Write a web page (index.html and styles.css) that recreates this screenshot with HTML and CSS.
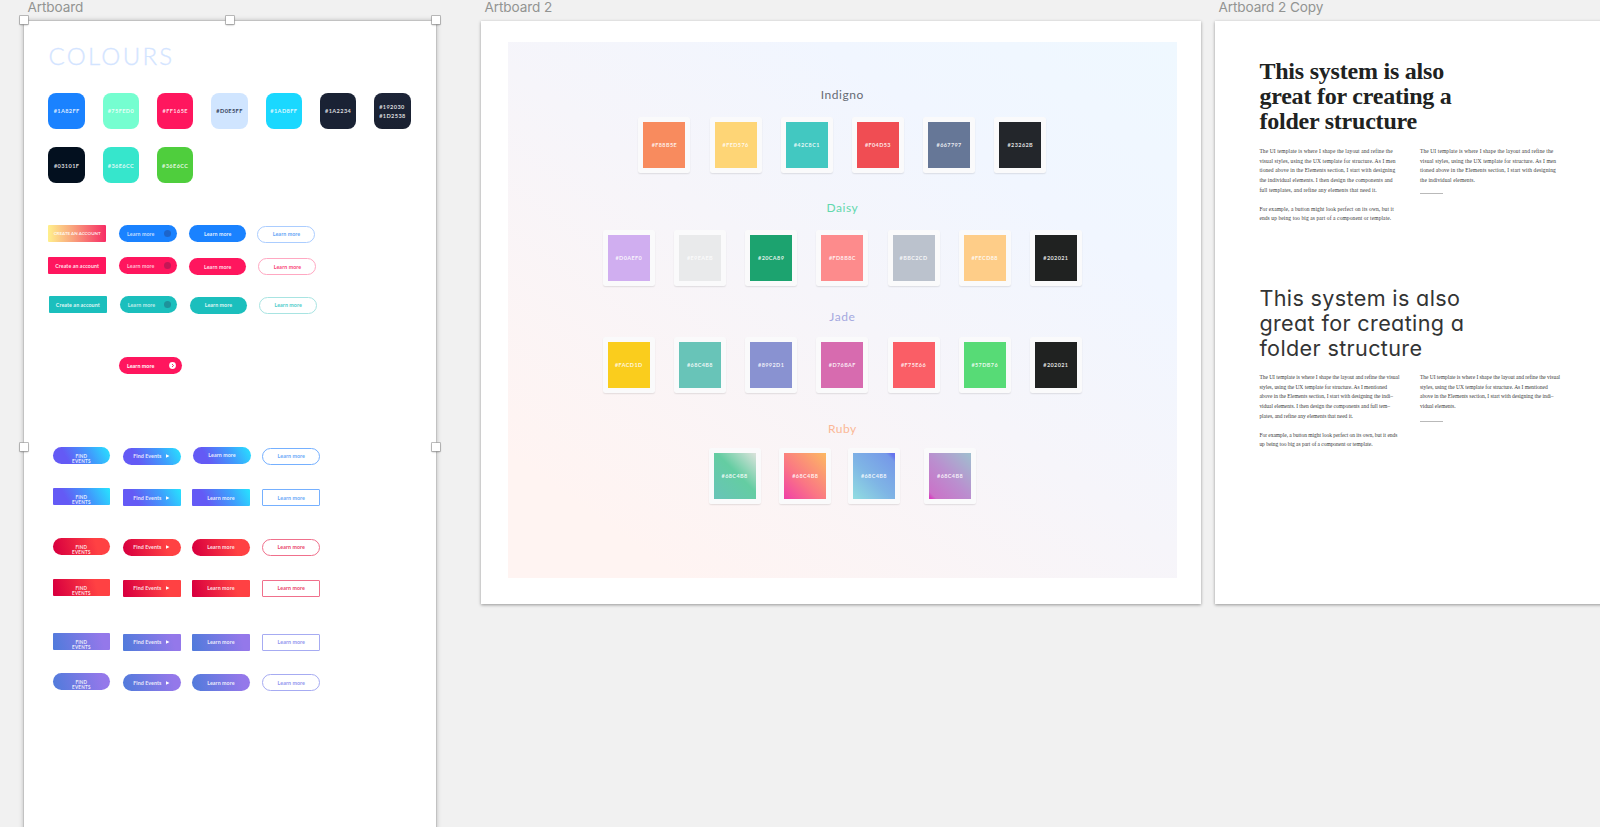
FILE: index.html
```html
<!DOCTYPE html>
<html lang="en">
<head>
<meta charset="utf-8">
<title>Style guide artboards</title>
<link rel="stylesheet" href="styles.css">
</head>
<body>
<main class="canvas">

<section class="artboard-wrap one">
  <h2 class="label">Artboard</h2>
  <div class="artboard selected">
    <i class="handle tl"></i><i class="handle tc"></i><i class="handle tr"></i><i class="handle ml"></i><i class="handle mr"></i>
    <h1 class="title">COLOURS</h1>
    <div class="chips">
      <div class="chip c1">#1A82FF</div><div class="chip c2">#75FED0</div><div class="chip c3">#FF165E</div><div class="chip c4">#D0E5FF</div><div class="chip c5">#1AD8FF</div><div class="chip c6">#1A2234</div><div class="chip c7">#192030<br>#1D2538</div>
      <div class="chip c8">#03101F</div><div class="chip c9">#36E6CC</div><div class="chip c10">#36E6CC</div>
    </div>

    <div class="row r1"><a class="btn sunset caps">CREATE AN ACCOUNT</a><a class="btn pill blue more">Learn more<i class="dot"></i></a><a class="btn pill blue">Learn more</a><a class="btn pill line sky low">Learn more</a></div>
    <div class="row r2"><a class="btn pink">Create an account</a><a class="btn pill pink more">Learn more<i class="dot"></i></a><a class="btn pill pink low">Learn more</a><a class="btn pill line rose low">Learn more</a></div>
    <div class="row r3"><a class="btn teal">Create an account</a><a class="btn pill teal more">Learn more<i class="dot"></i></a><a class="btn pill teal low">Learn more</a><a class="btn pill line mint low">Learn more</a></div>
    <div class="row r4"><a class="btn pill pink more wide">Learn more<svg class="go" viewBox="0 0 7 7"><circle cx="3.5" cy="3.5" r="3.4" fill="#fff"/><path d="M3 2l1.5 1.5L3 5" fill="none" stroke="#ff165e" stroke-width=".9"/></svg></a></div>

    <div class="row alt g1"><a class="btn pill ocean find"><span>FIND<br>EVENTS</span></a><a class="btn pill ocean play low">Find Events<svg viewBox="0 0 4 4"><path d="M0 .3L3.5 2 0 3.7z"/></svg></a><a class="btn pill ocean nudge">Learn more</a><a class="btn pill line azure low">Learn more</a></div>
    <div class="row alt g2"><a class="btn ocean find"><span>FIND<br>EVENTS</span></a><a class="btn ocean play low">Find Events<svg viewBox="0 0 4 4"><path d="M0 .3L3.5 2 0 3.7z"/></svg></a><a class="btn ocean low">Learn more</a><a class="btn line azure low">Learn more</a></div>
    <div class="row alt g3"><a class="btn pill fire find"><span>FIND<br>EVENTS</span></a><a class="btn pill fire play low">Find Events<svg viewBox="0 0 4 4"><path d="M0 .3L3.5 2 0 3.7z"/></svg></a><a class="btn pill fire low">Learn more</a><a class="btn pill line crimson low">Learn more</a></div>
    <div class="row alt g4"><a class="btn fire find"><span>FIND<br>EVENTS</span></a><a class="btn fire play low">Find Events<svg viewBox="0 0 4 4"><path d="M0 .3L3.5 2 0 3.7z"/></svg></a><a class="btn fire low">Learn more</a><a class="btn line crimson low">Learn more</a></div>
    <div class="row alt g5"><a class="btn dusk find"><span>FIND<br>EVENTS</span></a><a class="btn dusk play low">Find Events<svg viewBox="0 0 4 4"><path d="M0 .3L3.5 2 0 3.7z"/></svg></a><a class="btn dusk low">Learn more</a><a class="btn line lilac low">Learn more</a></div>
    <div class="row alt g6"><a class="btn pill dusk find"><span>FIND<br>EVENTS</span></a><a class="btn pill dusk play low">Find Events<svg viewBox="0 0 4 4"><path d="M0 .3L3.5 2 0 3.7z"/></svg></a><a class="btn pill dusk low">Learn more</a><a class="btn pill line lilac low">Learn more</a></div>
  </div>
</section>

<section class="artboard-wrap two">
  <h2 class="label">Artboard 2</h2>
  <div class="artboard">
    <div class="palette">
      <h3 class="name indigno">Indigno</h3>
      <div class="cards"><div class="card p1">#F88B5E</div><div class="card p2">#FED576</div><div class="card p3">#42C8C1</div><div class="card p4">#F04D53</div><div class="card p5">#667797</div><div class="card p6">#23262B</div></div>
      <h3 class="name daisy">Daisy</h3>
      <div class="cards"><div class="card p7">#D0AEF0</div><div class="card p8">#E9EAEB</div><div class="card p9">#20CA89</div><div class="card p10">#FD8B8C</div><div class="card p11">#BBC2CD</div><div class="card p12">#FECD88</div><div class="card p13">#202021</div></div>
      <h3 class="name jade">Jade</h3>
      <div class="cards"><div class="card p14">#FACD1D</div><div class="card p15">#68C4B8</div><div class="card p16">#8992D1</div><div class="card p17">#D76BAF</div><div class="card p18">#F75E66</div><div class="card p19">#57DB76</div><div class="card p13">#202021</div></div>
      <h3 class="name ruby">Ruby</h3>
      <div class="cards gradients"><div class="card p20">#68C4B8</div><div class="card p21">#68C4B8</div><div class="card p22">#68C4B8</div><div class="card p23">#68C4B8</div></div>
    </div>
  </div>
</section>

<section class="artboard-wrap three">
  <h2 class="label">Artboard 2 Copy</h2>
  <div class="artboard">
    <article class="sample">
      <h1 class="display">This system is also<br>great for creating a<br>folder structure</h1>
      <div class="columns">
        <div class="copy">
          <p>The UI template is where I shape the layout and refine the<br>visual styles, using the UX template for structure. As I men<br>tioned above in the Elements section, I start with designing<br>the individual elements. I then design the components and<br>full templates, and refine any elements that need it.</p>
          <p>For example, a button might look perfect on its own, but it<br>ends up being too big as part of a component or template.</p>
        </div>
        <div class="copy">
          <p>The UI template is where I shape the layout and refine the<br>visual styles, using the UX template for structure. As I men<br>tioned above in the Elements section, I start with designing<br>the individual elements.</p>
          <hr>
        </div>
      </div>
    </article>
    <article class="sample second">
      <h1 class="display sans">This system is also<br>great for creating a<br>folder structure</h1>
      <div class="columns">
        <div class="copy">
          <p>The UI template is where I shape the layout and refine the visual<br>styles, using the UX template for structure. As I mentioned<br>above in the Elements section, I start with designing the indi–<br>vidual elements. I then design the components and full tem–<br>plates, and refine any elements that need it.</p>
          <p>For example, a button might look perfect on its own, but it ends<br>up being too big as part of a component or template.</p>
        </div>
        <div class="copy">
          <p>The UI template is where I shape the layout and refine the visual<br>styles, using the UX template for structure. As I mentioned<br>above in the Elements section, I start with designing the indi–<br>vidual elements.</p>
          <hr>
        </div>
      </div>
    </article>
  </div>
</section>

</main>
</body>
</html>
```
FILE: styles.css
```css
* { box-sizing: border-box; margin: 0; }
body { background: #f1f1f1; overflow: hidden; font-family: Lato, "Liberation Sans", sans-serif; }

/* canvas and artboards */
.canvas { position: relative; width: 1600px; height: 827px; overflow: hidden; }
.artboard-wrap { position: absolute; top: 0; }
.one { left: 24px; width: 412px; }
.two { left: 481px; width: 720px; }
.three { left: 1215px; width: 720px; }
.label { height: 21px; padding-left: 3.5px; font: 400 13.6px/15px Inter, sans-serif; letter-spacing: -.1px; color: #929492; white-space: nowrap; }
.artboard { height: 582.6px; background: #fff; box-shadow: 0 1px 3px rgba(0,0,0,.38); }
.selected { position: relative; height: 900px; padding: 21.6px 0 0 24.4px; box-shadow: 0 0 0 1px #c2c2c2, 0 0 0 2px #dcdcdc, 0 0 5px rgba(0,0,0,.3); }
.handle { position: absolute; width: 8px; height: 8px; background: #fff; box-shadow: 0 0 0 .7px #a2a2a2, 0 1px 2px rgba(0,0,0,.4); }
.tl, .tc, .tr { top: -5px; }
.tl, .ml { left: -4.4px; }
.tc { left: 202px; }
.tr, .mr { right: -4.2px; }
.ml, .mr { top: 422px; }

/* colour chips */
.title { height: 50px; font: 300 24px/26px Lato, sans-serif; letter-spacing: 2.3px; color: #d2e4ff; -webkit-text-stroke: .3px #d6e6ff; }
.chips { display: grid; grid-template-columns: repeat(7, 36.5px); grid-auto-rows: 36.5px; gap: 17.8px; }
.chip { display: flex; align-items: center; justify-content: center; border-radius: 8px; font-size: 5.6px; line-height: 9px; font-weight: 700; letter-spacing: .4px; color: rgba(255,255,255,.85); }
.c1 { background: #1a82ff; } .c2 { background: #75fed0; } .c3 { background: #ff165e; }
.c4 { background: #d0e5ff; color: #35425c; } .c5 { background: #1ad8ff; } .c6 { background: #1a2234; }
.c7 { background: linear-gradient(#1d2538, #192030); } .c8 { background: #03101f; } .c9 { background: #36e6cc; } .c10 { background: #4fce3d; }

/* buttons */
.row { display: flex; align-items: flex-start; gap: 12.4px; height: 17px; }
.row .btn:nth-child(2) { margin-left: .8px; }
.row .btn:nth-child(4) { margin-left: -.4px; }
.r1 .btn.sky { margin-left: -1.4px; }
.btn { display: flex; flex: none; align-items: center; justify-content: center; width: 57.5px; height: 17px; border-radius: 1px; font-size: 5.3px; line-height: 6px; font-weight: 700; letter-spacing: .08px; color: rgba(255,255,255,.88); white-space: nowrap; }
.pill { border-radius: 9px; }
.low { margin-top: .7px; }
.caps { font-size: 4.5px; letter-spacing: 0; }
.more { justify-content: space-between; padding: 0 6px 0 8px; color: rgba(255,255,255,.72); }
.dot { width: 7px; height: 7px; border-radius: 50%; background: rgba(40,30,70,.28); }
.wide { width: 63px; color: #fff; }
.go { width: 7px; height: 7px; }
.find { align-items: flex-start; padding-top: 7px; overflow: hidden; font-size: 4.6px; letter-spacing: .22px; text-align: center; }
.find span { line-height: 5px; }
.play { gap: 5px; padding-right: 0; }
.play svg { width: 4px; height: 4px; fill: #fff; }
.line { width: 58px; border: 1px solid; background: #fff; }
.blue { background: #1a82ff; } .pink { background: #ff165e; } .teal { background: #1bbfbd; }
.sunset { background: linear-gradient(90deg, #fff08c, #f9a87e 40%, #f72c65); }
.ocean { background: linear-gradient(62deg, #645af5 25%, #3f9dfc 65%, #26e5ff); }
.fire { background: linear-gradient(75deg, #d9003f 5%, #ff4143 75%); }
.dusk { background: linear-gradient(75deg, #4f7bdb, #9478ea 85%); }
.sky { color: #65a5f5; border-color: #abcdff; } .rose { color: #f83f78; border-color: #ffa8c2; } .mint { color: #4dccca; border-color: #a8e4e2; }
.azure { color: #67a9f8; border-color: #75b0ff; } .crimson { color: #e94469; border-color: #f0708c; } .lilac { color: #8f94ee; border-color: #a6abf2; }
.r1 { margin-top: 41.8px; } .r2 { margin-top: 15.2px; } .r3 { margin-top: 21.8px; padding-left: .7px; } .r4 { margin: 44.2px 0 0 70.6px; }
.row.r4 .btn { margin-left: 0; }
.alt { margin-left: 4.2px; gap: 13px; }
.alt .btn:nth-child(2) { margin-left: 0; }
.alt .btn:nth-child(3) { margin-left: -1.4px; }
.alt .btn:nth-child(4) { margin-left: -.4px; }
.alt .btn.nudge { margin-left: -.3px; }
.alt .btn.nudge + .line { margin-left: -1.5px; }
.g1 { margin-top: 72.6px; } .g2 { margin-top: 24.5px; } .g3 { margin-top: 32.8px; } .g4, .g5, .g6 { margin-top: 24px; } .g5 { margin-top: 36.6px; } .g6 { margin-top: 23.5px; }

/* palettes */
.two .artboard { padding: 20.7px 24px 26px 26.7px; }
.palette { height: 536px; padding-top: 44px; background: linear-gradient(36deg, #fff4f2 12%, #f6f5fa 50%, #f1f6ff 75%, #eff8ff); }
.name { height: 31px; text-align: center; font-size: 12px; line-height: 18px; font-weight: 400; letter-spacing: .55px; }
.indigno { color: #666b74; } .daisy { color: #62d8ad; } .jade { color: #a4a8df; } .ruby { color: #fbb896; }
.name.jade { height: 28.3px; margin-top: -3.3px; }
.name.ruby { height: 29.2px; padding-top: 1px; }
.cards { display: flex; justify-content: center; gap: 19.2px; height: 56px; margin-bottom: 26px; }
.card { display: flex; align-items: center; justify-content: center; width: 52px; height: 56px; border: 5px solid #fafafb; border-radius: 2.5px; box-shadow: 0 1px 1.5px rgba(0,0,0,.1); background-clip: padding-box; background-origin: padding-box; font-size: 5.5px; font-weight: 700; letter-spacing: .4px; color: rgba(255,255,255,.88); }
.gradients { gap: 0; }
.gradients .card + .card { margin-left: 18.7px; }
.gradients .card:nth-child(3) { margin-left: 16.6px; }
.gradients .card:nth-child(4) { margin-left: 24.2px; }
.p1 { background-color: #f88b5e; } .p2 { background-color: #fed576; } .p3 { background-color: #42c8c1; } .p4 { background-color: #f04d53; } .p5 { background-color: #667797; } .p6 { background-color: #23262b; }
.p7 { background-color: #d0aef0; } .p8 { background-color: #e9eaeb; color: rgba(255,255,255,.8); } .p9 { background-color: #1ca36f; } .p10 { background-color: #fd8b8c; } .p11 { background-color: #bbc2cd; } .p12 { background-color: #fecd88; } .p13 { background-color: #202221; }
.p14 { background-color: #facd1d; } .p15 { background-color: #68c4b8; } .p16 { background-color: #8992d1; } .p17 { background-color: #d76baf; } .p18 { background-color: #fa5e66; } .p19 { background-color: #57db76; }
.p20 { background-image: linear-gradient(45deg, #68c4b8, #64cda2 55%, #dce3dc); }
.p21 { background-image: linear-gradient(45deg, #f03fa7, #fa7585 40%, #fcb962); }
.p22 { background-image: linear-gradient(45deg, #91dde1, #7fb5e5 45%, #769ae8 89%, #6674ed 95%); }
.p23 { background-image: linear-gradient(45deg, #d73fc0 3%, #ca73c8 9%, #ba8fcf 50%, #9fc0cf); }

/* type samples */
.three .artboard { padding: 38.4px 0 0 44.4px; }
.display { height: 87.5px; font: 700 24px/24.6px "Liberation Serif", serif; letter-spacing: -.22px; color: #202221; white-space: nowrap; }
.sans { height: 86.6px; font: 400 21.6px/24.6px Inter, sans-serif; font-feature-settings: "cv11"; letter-spacing: .35px; color: #333434; }
.columns { display: grid; grid-template-columns: 160.6px 160px; }
.copy { font: 400 5.5px/9.65px "Liberation Serif", serif; letter-spacing: .095px; color: #3a3a3a; white-space: nowrap; }
.copy p + p { margin-top: 9.65px; }
.copy hr { width: 23.5px; height: 1px; margin-top: 7.8px; border: 0; background: #b9b9b9; }
.second { margin-top: 62.2px; }
.second .copy { letter-spacing: -.035px; }
.second hr { margin-top: 9.3px; }
```
